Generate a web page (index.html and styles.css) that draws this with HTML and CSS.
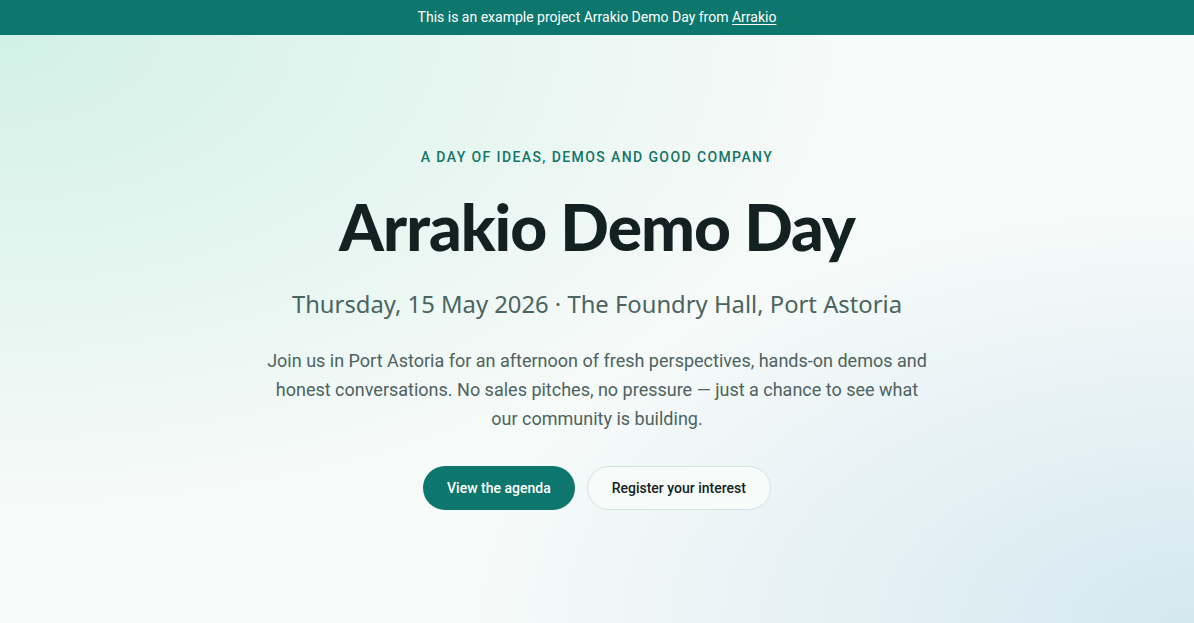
FILE: index.html
```html
<!DOCTYPE html>
<html lang="en">
<head>
<meta charset="utf-8">
<title>Arrakio Demo Day</title>
<link rel="stylesheet" href="styles.css">
</head>
<body>
<div class="banner">This is an example project Arrakio Demo Day from <a href="#">Arrakio</a></div>
<main class="hero">
  <div class="hero-inner">
    <p class="eyebrow">A DAY OF IDEAS, DEMOS AND GOOD COMPANY</p>
    <h1 class="title">Arrakio Demo Day</h1>
    <p class="subtitle">Thursday, 15 May 2026 · The Foundry Hall, Port Astoria</p>
    <p class="lead">Join us in Port Astoria for an afternoon of fresh perspectives, hands-on demos and honest conversations. No sales pitches, no pressure — just a chance to see what our community is building.</p>
    <div class="actions">
      <a class="btn btn-primary" href="#">View the agenda</a>
      <a class="btn btn-secondary" href="#">Register your interest</a>
    </div>
  </div>
</main>
</body>
</html>
```
FILE: styles.css
```css
* { box-sizing: border-box; }
html, body { margin: 0; padding: 0; }
body {
  font-family: Roboto, "Liberation Sans", sans-serif;
  color: #132220;
  background: #f5faf9;
}
.banner {
  height: 35px;
  background: #0d766d;
  color: #ffffff;
  font-size: 14px;
  line-height: 35px;
  text-align: center;
}
.banner a { color: #ffffff; text-decoration: underline; text-underline-offset: 2px; }
.hero {
  min-height: 588px;
  background:
    radial-gradient(ellipse 70% 80% at 0% 0%, rgba(208, 240, 230, 0.95), rgba(208, 240, 230, 0) 100%),
    radial-gradient(ellipse 60% 70% at 100% 100%, rgba(212, 232, 240, 1), rgba(212, 232, 240, 0) 100%),
    #f6faf9;
  display: flex;
  justify-content: center;
  padding-top: 112px;
}
.hero-inner {
  width: 680px;
  text-align: center;
  display: flex;
  flex-direction: column;
  align-items: center;
}
.eyebrow {
  margin: 0;
  font-size: 14px;
  font-weight: 500;
  letter-spacing: 1.4px;
  color: #137468;
  line-height: 20px;
}
.title {
  margin: 24px 0 0;
  font-family: Lato, "Noto Sans", sans-serif;
  font-weight: 900;
  font-size: 64px;
  line-height: 72px;
  letter-spacing: -1px;
  color: #132220;
}
.subtitle {
  margin: 25px 0 0;
  font-family: "Noto Sans", "Open Sans", sans-serif;
  font-size: 23.8px;
  line-height: 32px;
  color: #4a6561;
}
.lead {
  margin: 26px 0 0;
  font-size: 18px;
  line-height: 29px;
  color: #4d6360;
  width: 670px;
}
.actions {
  margin-top: 33px;
  display: flex;
  gap: 12px;
}
.btn {
  height: 44px;
  padding: 0 24px;
  border-radius: 999px;
  font-size: 14px;
  font-weight: 500;
  display: inline-flex;
  align-items: center;
  text-decoration: none;
}
.btn-primary { background: #0d766d; color: #ffffff; }
.btn-secondary {
  background: #f7fbfa;
  color: #132220;
  border: 1px solid #cfe6e0;
}
```
